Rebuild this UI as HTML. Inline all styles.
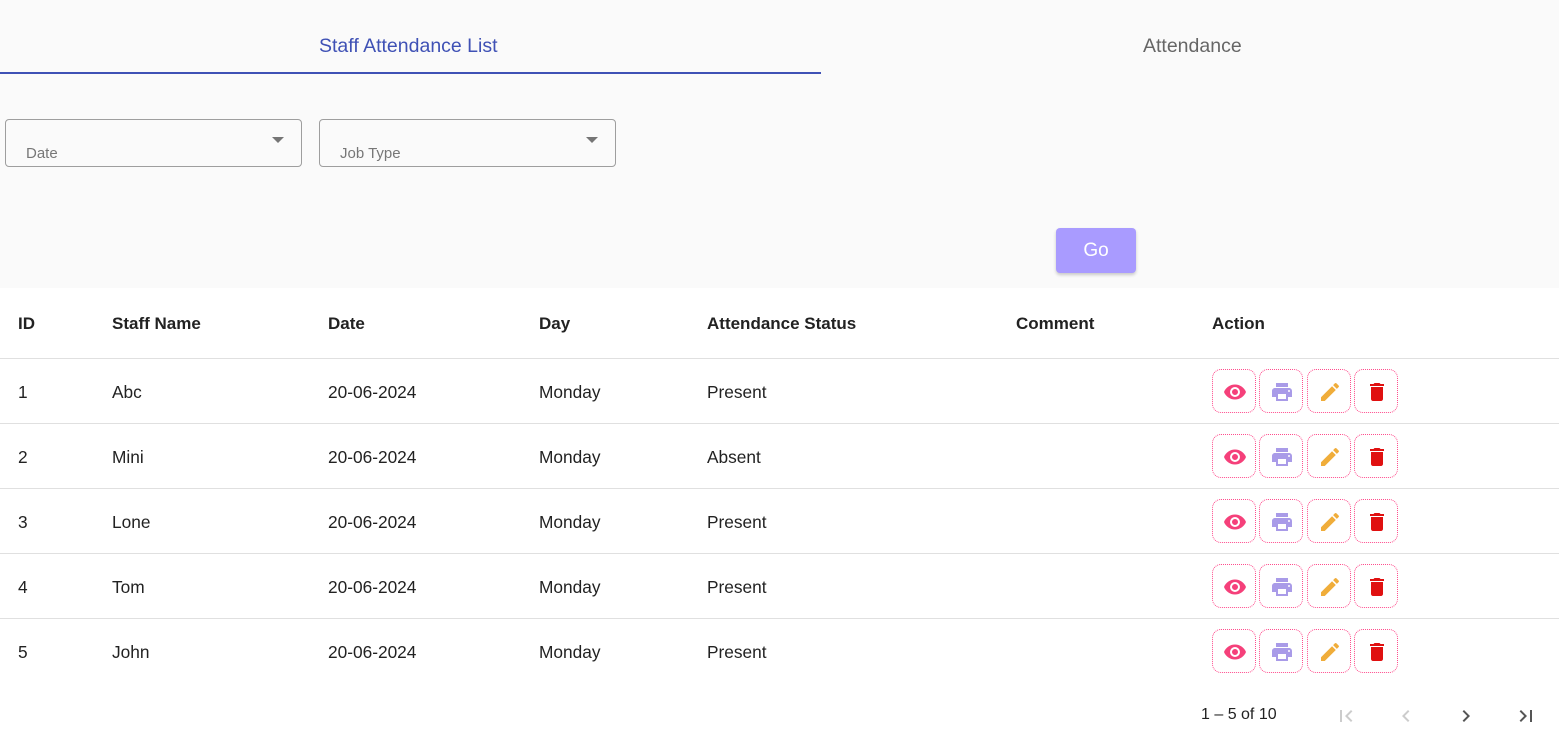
<!DOCTYPE html>
<html><head><style>
*{box-sizing:border-box;margin:0;padding:0}
body{width:1559px;height:736px;overflow:hidden;font-family:"Liberation Sans",sans-serif;background:#fff;color:#222;position:relative}
.top{position:absolute;left:0;top:0;width:1559px;height:288px;background:#fafafa}
.tab{position:absolute;top:35px;font-size:19.5px}
.ul{position:absolute;left:0;top:72px;width:821px;height:2px;background:#3f51b5}
.sel{position:absolute;top:119px;width:297px;height:48px;border:1px solid #9e9e9e;border-radius:4px}
.sel span{position:absolute;left:20px;top:25px;font-size:15px;color:#777}
.sel i{position:absolute;right:17px;top:17px;width:0;height:0;border-left:6px solid transparent;border-right:6px solid transparent;border-top:6px solid #757575}
.go{position:absolute;left:1056px;top:228px;width:80px;height:45px;background:#a99bff;border-radius:4px;color:#fff;font-size:19px;text-align:center;line-height:45px;box-shadow:0 2px 3px rgba(0,0,0,.2)}
.row{position:absolute;left:0;width:1559px;height:65px;border-bottom:1px solid #e0e0e0;font-size:17.3px}
.row div{position:absolute;top:23px}
.hd{font-weight:bold;top:288px;height:71px;font-size:17px}
.hd div{top:26px}
.b{position:absolute;width:44px;height:44px;border:1px dotted #ff4d8d;border-radius:9px;top:10px}
.b svg{position:absolute;left:10px;top:10px}
.pg{position:absolute;top:706px;font-size:16px}
</style></head><body>
<div class="top">
<div class="tab" style="left:319px;color:#3f51b5">Staff Attendance List</div>
<div class="tab" style="left:1143px;color:#666">Attendance</div>
<div class="ul"></div>
<div class="sel" style="left:5px"><span>Date</span><i></i></div>
<div class="sel" style="left:319px"><span>Job Type</span><i></i></div>
<div class="go">Go</div>
</div>
<div class="row hd"><div style="left:18px">ID</div><div style="left:112px">Staff Name</div><div style="left:328px">Date</div><div style="left:539px">Day</div><div style="left:707px">Attendance Status</div><div style="left:1016px">Comment</div><div style="left:1212px">Action</div></div>
<div id="rows"></div>
<div class="pg" style="left:1201px">1 – 5 of 10</div>
<svg style="position:absolute;left:1334px;top:704px" width="24" height="24" viewBox="0 0 24 24"><path d="M18.4 16.6L13.8 12l4.6-4.6L17 6l-6 6 6 6zM6 6h2v12H6z" fill="#ccc"/></svg>
<svg style="position:absolute;left:1394px;top:704px" width="24" height="24" viewBox="0 0 24 24"><path d="M15.4 7.4L14 6l-6 6 6 6 1.4-1.4L10.8 12z" fill="#ccc"/></svg>
<svg style="position:absolute;left:1454px;top:704px" width="24" height="24" viewBox="0 0 24 24"><path d="M10 6L8.6 7.4 13.2 12l-4.6 4.6L10 18l6-6z" fill="#555"/></svg>
<svg style="position:absolute;left:1514px;top:704px" width="24" height="24" viewBox="0 0 24 24"><path d="M5.6 7.4L10.2 12l-4.6 4.6L7 18l6-6-6-6zM16 6h2v12h-2z" fill="#555"/></svg>
<script>
var d=[["1","Abc","Present"],["2","Mini","Absent"],["3","Lone","Present"],["4","Tom","Present"],["5","John","Present"]];
var h="";
d.forEach(function(r,i){var t=359+i*65;var last=i==4?"border-bottom:none;":"";
h+='<div class="row" style="top:'+t+'px;'+last+'"><div style="left:18px">'+r[0]+'</div><div style="left:112px">'+r[1]+'</div><div style="left:328px">20-06-2024</div><div style="left:539px">Monday</div><div style="left:707px">'+r[2]+'</div>'+
'<span class="b" style="left:1212px"><svg width="24" height="24" viewBox="0 0 24 24"><path d="M12 4.5C7 4.5 2.7 7.6 1 12c1.7 4.4 6 7.5 11 7.5s9.3-3.1 11-7.5c-1.7-4.4-6-7.5-11-7.5zM12 17a5 5 0 110-10 5 5 0 010 10zm0-8a3 3 0 100 6 3 3 0 000-6z" fill="#f5407a"/></svg></span>'+
'<span class="b" style="left:1259px"><svg width="24" height="24" viewBox="0 0 24 24"><path d="M19 8H5c-1.7 0-3 1.3-3 3v6h4v4h12v-4h4v-6c0-1.7-1.3-3-3-3zm-3 11H8v-5h8v5zm3-7a1 1 0 110-2 1 1 0 010 2zm-1-9H6v4h12V3z" fill="#a99be8"/></svg></span>'+
'<span class="b" style="left:1307px"><svg width="24" height="24" viewBox="0 0 24 24"><path d="M3 17.25V21h3.75L17.8 9.94l-3.75-3.75zM20.7 7.04a1 1 0 000-1.410l-2.34-2.34a1 1 0 00-1.41 0l-1.83 1.83 3.75 3.75z" fill="#f0ad3a"/></svg></span>'+
'<span class="b" style="left:1354px"><svg width="24" height="24" viewBox="0 0 24 24"><path d="M6 19c0 1.1.9 2 2 2h8c1.1 0 2-.9 2-2V7H6zM19 4h-3.5l-1-1h-5l-1 1H5v2h14z" fill="#e01010"/></svg></span></div>';});
document.getElementById("rows").innerHTML=h;
</script>
</body></html>
